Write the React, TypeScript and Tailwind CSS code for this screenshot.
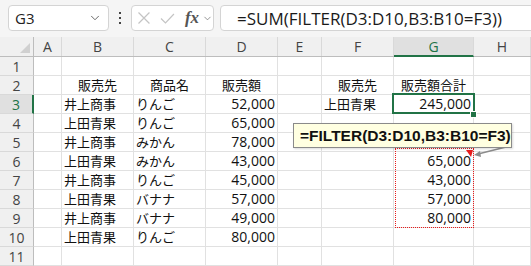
import { ChevronDown } from 'lucide-react';

type Align = 'l' | 'c' | 'r';
type Cell = { v: string; a?: Align };

const colLetters = ['A', 'B', 'C', 'D', 'E', 'F', 'G', 'H'];
const colWidths = ['w-[28px]', 'w-[72px]', 'w-[72px]', 'w-[72px]', 'w-[44px]', 'w-[72px]', 'w-[80px]', 'flex-1'];

const rows: (Cell | null)[][] = [
  [],
  [null, { v: '販売先', a: 'c' }, { v: '商品名', a: 'c' }, { v: '販売額', a: 'c' }, null, { v: '販売先', a: 'c' }, { v: '販売額合計', a: 'c' }],
  [null, { v: '井上商事' }, { v: 'りんご' }, { v: '52,000', a: 'r' }, null, { v: '上田青果' }, { v: '245,000', a: 'r' }],
  [null, { v: '上田青果' }, { v: 'りんご' }, { v: '65,000', a: 'r' }],
  [null, { v: '井上商事' }, { v: 'みかん' }, { v: '78,000', a: 'r' }],
  [null, { v: '上田青果' }, { v: 'みかん' }, { v: '43,000', a: 'r' }, null, null, { v: '65,000', a: 'r' }],
  [null, { v: '井上商事' }, { v: 'りんご' }, { v: '45,000', a: 'r' }, null, null, { v: '43,000', a: 'r' }],
  [null, { v: '上田青果' }, { v: 'バナナ' }, { v: '57,000', a: 'r' }, null, null, { v: '57,000', a: 'r' }],
  [null, { v: '井上商事' }, { v: 'バナナ' }, { v: '49,000', a: 'r' }, null, null, { v: '80,000', a: 'r' }],
  [null, { v: '上田青果' }, { v: 'りんご' }, { v: '80,000', a: 'r' }],
  [],
];

function Toolbar() {
  return (
    <div className="h-[37px] bg-[#f5f5f5] flex items-start pt-[5px] pl-[8px]">
      {/* Name box */}
      <div className="w-[101px] h-[26px] bg-white border border-[#d4d4d4] rounded-[4px] flex items-center justify-between pl-[6px] pr-[6px]">
        <span className="font-['Open_Sans',sans-serif] text-[15px] text-[#222] leading-none">G3</span>
        <ChevronDown size={14} strokeWidth={1.5} className="text-[#555]" />
      </div>

      {/* Separator dots */}
      <div className="w-[22px] h-[26px] flex flex-col items-center justify-center gap-[3px]">
        <span className="w-[2px] h-[2px] bg-[#444]" />
        <span className="w-[2px] h-[2px] bg-[#444]" />
        <span className="w-[2px] h-[2px] bg-[#444]" />
      </div>

      {/* Cancel / enter / fx */}
      <div className="w-[83px] h-[26px] bg-white border border-[#d4d4d4] rounded-[4px] flex items-center pl-[4px]">
        <svg width="14" height="14" viewBox="0 0 14 14" className="ml-[1px]">
          <path d="M1.5 1.5 L12.5 12.5 M12.5 1.5 L1.5 12.5" stroke="#c4c4c4" strokeWidth="1.2" fill="none" />
        </svg>
        <svg width="15" height="13" viewBox="0 0 15 13" className="ml-[9px]">
          <path d="M1 6.5 L5.5 11 L14 2" stroke="#c4c4c4" strokeWidth="1.2" fill="none" />
        </svg>
        <span className="ml-[10px] font-['Liberation_Serif',serif] italic font-semibold text-[17px] text-[#555] leading-none -mt-[2px]">fx</span>
        <ChevronDown size={11} strokeWidth={1.5} className="ml-[3px] text-[#666]" />
      </div>

      {/* Formula */}
      <div className="ml-[6px] flex-1 -mr-[12px] h-[26px] bg-white border border-[#d4d4d4] rounded-[4px] flex items-center pl-[16px]">
        <span className="font-['Open_Sans',sans-serif] text-[17px] text-[#1a1a1a] leading-none whitespace-nowrap">
          =SUM(FILTER(D3:D10,B3:B10=F3))
        </span>
      </div>
    </div>
  );
}

function HeaderRow() {
  return (
    <div className="flex h-[20px] bg-[#f0f0f0] border-b border-[#bdbdbd]">
      <div className="w-[34px] border-r border-[#bdbdbd] relative">
        <svg width="11" height="11" viewBox="0 0 11 11" className="absolute right-[2px] bottom-[2px]">
          <polygon points="10,0 10,10 0,10" fill="#d0d0d0" />
        </svg>
      </div>
      {colLetters.map((c, i) => {
        const sel = c === 'G';
        return (
          <div
            key={c}
            className={`${colWidths[i]} flex items-center justify-center border-r border-[#d9d9d9] font-['Open_Sans',sans-serif] text-[14px] ${
              sel ? 'bg-[#e0e0e0] text-[#217346] border-b-2 border-b-[#217346] -mb-[1px]' : 'text-[#444]'
            }`}
          >
            {c}
          </div>
        );
      })}
    </div>
  );
}

function SheetRow({ n, cells }: { n: number; cells: (Cell | null)[] }) {
  const sel = n === 3;
  return (
    <div className="flex h-[19px]">
      <div
        className={`w-[34px] flex items-center justify-center border-b border-[#d9d9d9] font-['Open_Sans',sans-serif] text-[14px] ${
          sel ? 'bg-[#e0e0e0] text-[#217346] border-r-2 border-r-[#217346]' : 'bg-[#f0f0f0] text-[#444] border-r border-r-[#bdbdbd]'
        }`}
      >
        {n}
      </div>
      {colLetters.map((c, i) => {
        const cell = cells[i];
        const align = cell?.a ?? 'l';
        const num = align === 'r';
        return (
          <div
            key={c}
            className={`${colWidths[i]} flex items-end pb-[1px] px-[2px] border-r border-b border-[#e1e1e1] whitespace-nowrap overflow-visible ${
              align === 'c' ? 'justify-center' : align === 'r' ? 'justify-end' : 'justify-start'
            }`}
          >
            {cell && (
              <span
                className={
                  num
                    ? "font-['Open_Sans',sans-serif] text-[14px] leading-[17px] text-[#111]"
                    : "font-['Noto_Sans_CJK_JP',sans-serif] text-[13px] leading-[17px] text-[#111]"
                }
              >
                {cell.v}
              </span>
            )}
          </div>
        );
      })}
    </div>
  );
}

export default function App() {
  return (
    <div className="relative w-[531px] h-[266px] overflow-hidden bg-white">
      <Toolbar />
      <HeaderRow />
      {rows.map((cells, i) => (
        <SheetRow key={i} n={i + 1} cells={cells} />
      ))}

      {/* Active cell G3 */}
      <div className="absolute left-[392px] top-[93px] w-[83px] h-[21px] border-2 border-[#217346]" />
      <div className="absolute left-[470px] top-[111px] w-[7px] h-[7px] bg-[#217346] border border-white" />

      {/* Spill range */}
      <div className="absolute left-[395px] top-[148px] w-[79px] h-[80px] border border-dotted border-[#e81c1c]" />

      {/* Annotation arrow */}
      <svg className="absolute left-0 top-0 pointer-events-none" width="531" height="266" viewBox="0 0 531 266">
        <line x1="506" y1="147" x2="478" y2="154" stroke="#8c8c8c" strokeWidth="1.3" />
        <polygon points="474,155 480,151 481,157" fill="#8c8c8c" />
        <polygon points="466,150 473,150 471,157" fill="#e81c1c" />
      </svg>

      {/* Formula tooltip */}
      <div className="absolute left-[293px] top-[123px] w-[219px] h-[25px] bg-[#ffffe1] border border-[#8a8a8a] flex items-center pl-[6px] shadow-[1px_1px_2px_rgba(0,0,0,0.15)]">
        <span className="font-['Liberation_Sans',sans-serif] font-bold text-[15.5px] text-[#111] leading-none whitespace-nowrap">
          =FILTER(D3:D10,B3:B10=F3)
        </span>
      </div>
    </div>
  );
}
